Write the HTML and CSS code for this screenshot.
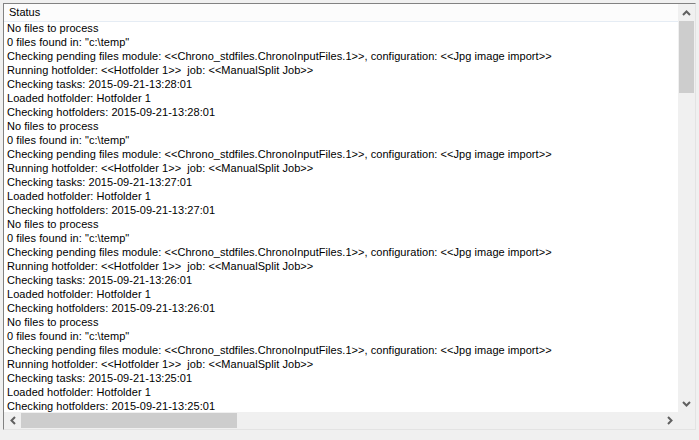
FILE: index.html
```html
<!DOCTYPE html>
<html lang="en">
<head>
  <meta charset="UTF-8">
  <title>Status</title>
  <link rel="stylesheet" href="styles.css">
</head>
<body>
  <div class="listview">
    <div class="content">
      <div class="header">Status</div>
      <div class="rows" id="rows"></div>
    </div>
    <div class="vscroll">
      <div class="arrow">
        <svg width="9" height="6" viewBox="0 0 9 6"><polyline points="1,5 4.5,1.5 8,5" fill="none" stroke="#606060" stroke-width="2"/></svg>
      </div>
      <div class="vthumb"></div>
      <div class="vtrack"></div>
      <div class="arrow">
        <svg width="9" height="6" viewBox="0 0 9 6"><polyline points="1,1 4.5,4.5 8,1" fill="none" stroke="#606060" stroke-width="2"/></svg>
      </div>
    </div>
    <div class="hscroll">
      <div class="arrow">
        <svg width="6" height="9" viewBox="0 0 6 9"><polyline points="5,1 1.5,4.5 5,8" fill="none" stroke="#606060" stroke-width="2"/></svg>
      </div>
      <div class="hthumb"></div>
      <div class="htrack"></div>
      <div class="arrow">
        <svg width="6" height="9" viewBox="0 0 6 9"><polyline points="1,1 4.5,4.5 1,8" fill="none" stroke="#606060" stroke-width="2"/></svg>
      </div>
    </div>
    <div class="corner"></div>
  </div>

  <script>
    const rows = document.getElementById('rows');
    const times = ['13:28:01', '13:27:01', '13:26:01', '13:25:01'];

    times.forEach(t => {
      const lines = [
        'No files to process',
        '0 files found in: "c:\\temp"',
        'Checking pending files module: <<Chrono_stdfiles.ChronoInputFiles.1>>, configuration: <<Jpg image import>>',
        'Running hotfolder: <<Hotfolder 1>>  job: <<ManualSplit Job>>',
        'Checking tasks: 2015-09-21-' + t,
        'Loaded hotfolder: Hotfolder 1',
        'Checking hotfolders: 2015-09-21-' + t
      ];
      lines.forEach(text => {
        const row = document.createElement('div');
        row.className = 'row';
        row.textContent = text;
        rows.appendChild(row);
      });
    });
  </script>
</body>
</html>
```

FILE: styles.css
```css
body {
  margin: 0;
  background: #f0f0f0;
  font-family: "Liberation Sans", Arial, sans-serif;
  font-size: 11px;
}

.listview {
  margin: 3px 0 0 3px;
  width: 691px;
  height: 425px;
  border: 1px solid;
  border-color: #828282 #e3e3e3 #e3e3e3 #828282;
  display: grid;
  grid-template-columns: 1fr 17px;
  grid-template-rows: 1fr 17px;
  overflow: hidden;
}

.content {
  background: #fff;
  overflow: hidden;
}

.header {
  height: 17px;
  line-height: 17px;
  padding-left: 5px;
  background: #fcfcfc;
  border-bottom: 1px solid #e5ecf4;
  color: #000;
}

.rows {
  padding-left: 3px;
}

.row {
  height: 14px;
  line-height: 13px;
  white-space: pre;
  letter-spacing: 0.05px;
  color: #000;
}

.vscroll {
  display: flex;
  flex-direction: column;
  background: #f0f0f0;
}

.vthumb {
  height: 72px;
  margin: 0 1px;
  background: #cdcdcd;
}

.vtrack {
  flex: 1;
}

.hscroll {
  display: flex;
  background: #f0f0f0;
}

.hthumb {
  width: 216px;
  margin: 1px 0;
  background: #cdcdcd;
}

.htrack {
  flex: 1;
}

.arrow {
  width: 17px;
  height: 17px;
  display: flex;
  justify-content: center;
  align-items: center;
  flex-shrink: 0;
}

.corner {
  background: #f0f0f0;
}
```
